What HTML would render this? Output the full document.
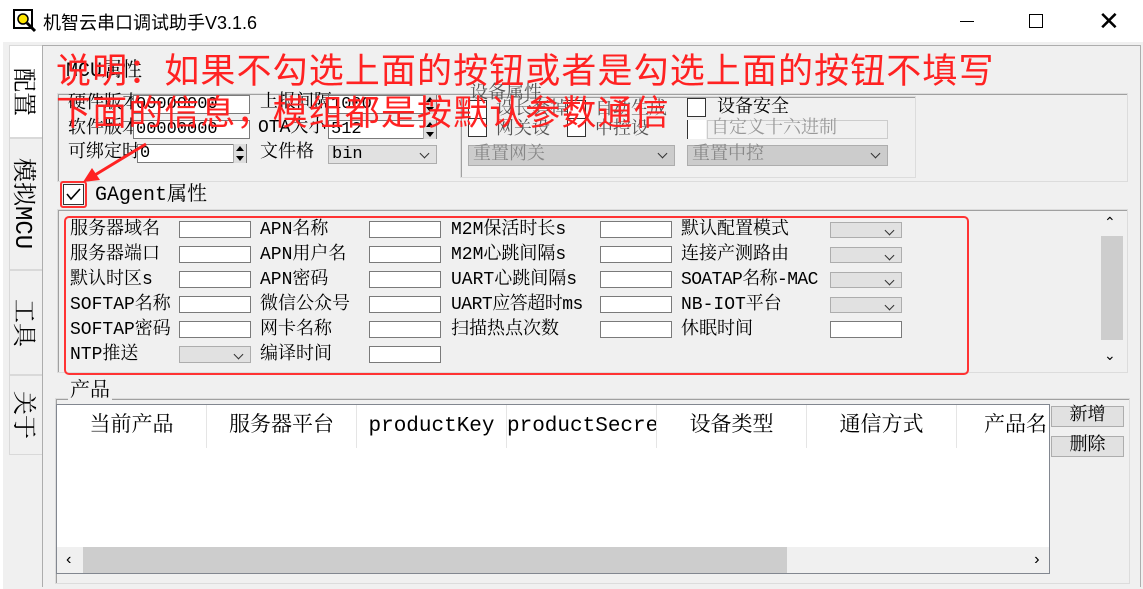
<!DOCTYPE html>
<html><head><meta charset="utf-8"><style>
*{box-sizing:border-box;margin:0;padding:0}
body{width:1143px;height:589px;background:#f0f0f0;position:relative;overflow:hidden;font-family:"Liberation Mono","Noto Serif CJK SC",serif;color:#000}
.a{position:absolute}
.t{position:absolute;font-size:18px;line-height:20px;white-space:nowrap}
.in{position:absolute;background:#fff;border:1px solid #7a7a7a;height:19px;font-size:17px;line-height:17px;padding-left:2px}
.sel{position:absolute;background:#e1e1e1;border:1px solid #adadad;height:19px}
.sel:after{content:"";position:absolute;right:8px;top:4px;width:6px;height:6px;border-right:1px solid #333;border-bottom:1px solid #333;transform:rotate(45deg)}
.grp{position:absolute;border:1px solid #dcdcdc;box-shadow:inset 1px 1px 0 #a0a0a0}
.tab{position:absolute;left:9px;width:33px;writing-mode:vertical-rl;text-orientation:sideways;font-size:24px;display:flex;align-items:center;justify-content:center;border:1px solid #d9d9d9;border-right:none}
.red{color:#ff2222;font-family:"Liberation Sans","Noto Sans CJK SC",sans-serif;font-size:35px;letter-spacing:1.1px;line-height:40px;position:absolute;white-space:nowrap}
.cb{position:absolute;width:19px;height:19px;background:#fff;border:1px solid #333}
.th{position:absolute;top:405px;height:43px;font-size:21px;line-height:43px;text-align:center;border-right:1px solid #e5e5e5}
.spin{position:absolute;width:13px;height:19px;background:#ddd;border-left:1px solid #aaa}
.spin:before{content:"";position:absolute;left:2px;top:2px;border:4px solid transparent;border-bottom:5px solid #000;border-top:none}
.spin:after{content:"";position:absolute;left:2px;bottom:2px;border:4px solid transparent;border-top:5px solid #000;border-bottom:none}
</style></head><body>
<div class="a" style="left:0;top:0;width:1143px;height:42px;background:#fff"></div>
<svg class="a" style="left:12px;top:9px" width="26" height="26"><rect x="2" y="1" width="18" height="18" fill="#fff" stroke="#000" stroke-width="2"/><circle cx="11" cy="10" r="5" fill="#ffe600" stroke="#000" stroke-width="1.5"/><line x1="15" y1="14" x2="23" y2="22" stroke="#000" stroke-width="3"/></svg>
<div class="a" style="left:43px;top:9px;font-family:'Liberation Sans','Noto Sans CJK SC',sans-serif;font-size:18px">机智云串口调试助手V3.1.6</div>
<div class="a" style="left:960px;top:21px;width:14px;height:1px;background:#000"></div>
<div class="a" style="left:1029px;top:14px;width:14px;height:14px;border:1px solid #000"></div>
<div class="a" style="left:1098px;top:6px;font-family:'Liberation Sans',sans-serif;font-size:26px;font-weight:100">✕</div>
<div class="a" style="left:0;top:42px;width:3px;height:547px;background:#fff"></div>
<div class="tab" style="top:45px;height:93px;background:#fff">配置</div>
<div class="tab" style="top:138px;height:132px">模拟MCU</div>
<div class="tab" style="top:270px;height:105px">工具</div>
<div class="tab" style="top:375px;height:80px">关于</div>
<div class="a" style="left:42px;top:45px;width:1099px;height:542px;border:1px solid #adadad;border-bottom:none"></div>
<div class="t" style="left:66px;top:62px;font-size:20px">MCU属性</div>
<div class="grp" style="left:57px;top:93px;width:1071px;height:89px"></div>
<div class="t" style="left:68px;top:94px">硬件版本</div><div class="in" style="left:133px;top:95px;width:117px">00000000</div>
<div class="t" style="left:68px;top:119px">软件版本</div><div class="in" style="left:133px;top:120px;width:117px">00000000</div>
<div class="t" style="left:68px;top:143px">可绑定时</div><div class="in" style="left:137px;top:144px;width:110px">0</div><div class="spin" style="left:233px;top:144px"></div>
<div class="t" style="left:260px;top:93px">上报间隔</div><div class="in" style="left:328px;top:95px;width:109px">1000</div><div class="spin" style="left:423px;top:95px"></div>
<div class="t" style="left:258px;top:118px">OTA大小</div><div class="in" style="left:328px;top:120px;width:109px">512</div><div class="spin" style="left:423px;top:120px"></div>
<div class="t" style="left:260px;top:143px">文件格</div><div class="sel" style="left:328px;top:145px;width:109px;font-size:17px;line-height:17px;padding-left:3px">bin</div>
<div class="grp" style="left:460px;top:96px;width:456px;height:82px"></div>
<div class="t" style="left:470px;top:84px;color:#555">设备属性</div>
<div class="cb" style="left:468px;top:100px"></div><div class="t" style="left:496px;top:100px;color:#555">设长套掉</div>
<div class="cb" style="left:468px;top:118px"></div><div class="t" style="left:496px;top:120px;color:#555">网关设</div>
<div class="cb" style="left:567px;top:100px"></div><div class="t" style="left:595px;top:100px;color:#555">自动生成</div>
<div class="cb" style="left:567px;top:118px"></div><div class="t" style="left:595px;top:120px;color:#555">中控设</div>
<div class="cb" style="left:687px;top:98px"></div><div class="t" style="left:717px;top:98px">设备安全</div>
<div class="a" style="left:687px;top:120px;width:19px;height:19px;background:#fff;border-left:1px solid #333"></div>
<div class="a" style="left:707px;top:120px;width:181px;height:19px;border:1px solid #ccc;background:#f0f0f0;color:#999;font-size:18px;line-height:17px;padding-left:3px">自定义十六进制</div>
<div class="sel" style="left:468px;top:145px;width:207px;height:21px;background:#ccc;color:#888;font-size:18px;line-height:18px;padding-left:4px">重置网关</div>
<div class="sel" style="left:687px;top:145px;width:201px;height:21px;background:#ccc;color:#888;font-size:18px;line-height:18px;padding-left:4px">重置中控</div>
<div class="a" style="left:60px;top:181px;width:27px;height:27px;border:2px solid #f33;border-radius:3px"></div>
<div class="a" style="left:63px;top:184px;width:21px;height:21px;border:1px solid #333;background:#fff"></div>
<svg class="a" style="left:63px;top:184px" width="21" height="21"><path d="M4 10 L8 15 L17 5" fill="none" stroke="#000" stroke-width="1.6"/></svg>
<div class="t" style="left:95px;top:185px;font-size:20px;line-height:22px">GAgent属性</div>
<div class="grp" style="left:57px;top:209px;width:1071px;height:164px"></div>
<div class="a" style="left:1100px;top:211px;width:24px;height:160px;background:#f0f0f0"></div>
<div class="a" style="left:1101px;top:236px;width:22px;height:104px;background:#cdcdcd"></div>
<div class="t" style="left:1104px;top:212px;font-size:14px;font-family:'Liberation Sans',sans-serif">⌃</div>
<div class="t" style="left:1104px;top:345px;font-size:14px;font-family:'Liberation Sans',sans-serif">⌄</div>
<div class="a" style="left:64px;top:216px;width:905px;height:159px;border:2px solid #f33;border-radius:5px"></div>
<div class="t" style="left:70px;top:220px">服务器域名</div><div class="in" style="left:179px;top:221px;width:72px;height:17px"></div>
<div class="t" style="left:70px;top:245px">服务器端口</div><div class="in" style="left:179px;top:246px;width:72px;height:17px"></div>
<div class="t" style="left:70px;top:270px">默认时区s</div><div class="in" style="left:179px;top:271px;width:72px;height:17px"></div>
<div class="t" style="left:70px;top:295px">SOFTAP名称</div><div class="in" style="left:179px;top:296px;width:72px;height:17px"></div>
<div class="t" style="left:70px;top:320px">SOFTAP密码</div><div class="in" style="left:179px;top:321px;width:72px;height:17px"></div>
<div class="t" style="left:70px;top:345px">NTP推送</div><div class="sel" style="left:179px;top:346px;width:72px;height:17px"></div>
<div class="t" style="left:260px;top:220px">APN名称</div><div class="in" style="left:369px;top:221px;width:72px;height:17px"></div>
<div class="t" style="left:260px;top:245px">APN用户名</div><div class="in" style="left:369px;top:246px;width:72px;height:17px"></div>
<div class="t" style="left:260px;top:270px">APN密码</div><div class="in" style="left:369px;top:271px;width:72px;height:17px"></div>
<div class="t" style="left:260px;top:295px">微信公众号</div><div class="in" style="left:369px;top:296px;width:72px;height:17px"></div>
<div class="t" style="left:260px;top:320px">网卡名称</div><div class="in" style="left:369px;top:321px;width:72px;height:17px"></div>
<div class="t" style="left:260px;top:345px">编译时间</div><div class="in" style="left:369px;top:346px;width:72px;height:17px"></div>
<div class="t" style="left:451px;top:220px">M2M保活时长s</div><div class="in" style="left:600px;top:221px;width:72px;height:17px"></div>
<div class="t" style="left:451px;top:245px">M2M心跳间隔s</div><div class="in" style="left:600px;top:246px;width:72px;height:17px"></div>
<div class="t" style="left:451px;top:270px">UART心跳间隔s</div><div class="in" style="left:600px;top:271px;width:72px;height:17px"></div>
<div class="t" style="left:451px;top:295px;letter-spacing:-0.5px">UART应答超时ms</div><div class="in" style="left:600px;top:296px;width:72px;height:17px"></div>
<div class="t" style="left:451px;top:320px">扫描热点次数</div><div class="in" style="left:600px;top:321px;width:72px;height:17px"></div>
<div class="t" style="left:681px;top:220px">默认配置模式</div><div class="sel" style="left:830px;top:222px;width:72px;height:16px"></div>
<div class="t" style="left:681px;top:245px">连接产测路由</div><div class="sel" style="left:830px;top:247px;width:72px;height:16px"></div>
<div class="t" style="left:681px;top:270px;letter-spacing:-0.6px">SOATAP名称-MAC</div><div class="sel" style="left:830px;top:272px;width:72px;height:16px"></div>
<div class="t" style="left:681px;top:295px">NB-IOT平台</div><div class="sel" style="left:830px;top:297px;width:72px;height:16px"></div>
<div class="t" style="left:681px;top:320px">休眠时间</div><div class="in" style="left:830px;top:321px;width:72px;height:17px"></div>
<div class="grp" style="left:55px;top:398px;width:1075px;height:186px"></div>
<div class="t" style="left:68px;top:382px;font-size:20px;background:#f0f0f0;padding:0 2px">产品</div>
<div class="a" style="left:56px;top:404px;width:994px;height:170px;background:#fff;border:1px solid #828790"></div>
<div class="th" style="left:57px;width:150px">当前产品</div>
<div class="th" style="left:207px;width:150px">服务器平台</div>
<div class="th" style="left:357px;width:150px">productKey</div>
<div class="th" style="left:507px;width:150px;text-align:right;padding-right:4px;overflow:hidden">productSecret</div>
<div class="th" style="left:657px;width:150px">设备类型</div>
<div class="th" style="left:807px;width:150px">通信方式</div>
<div class="th" style="left:957px;width:92px;border:none;text-align:left;padding-left:27px;overflow:hidden">产品名</div>
<div class="a" style="left:57px;top:547px;width:992px;height:26px;background:#f0f0f0"></div>
<div class="a" style="left:83px;top:547px;width:704px;height:26px;background:#cdcdcd"></div>
<div class="t" style="left:64px;top:550px;font-size:16px">‹</div>
<div class="t" style="left:1032px;top:550px;font-size:16px">›</div>
<div class="a" style="left:1051px;top:406px;width:73px;height:21px;background:#e1e1e1;border:1px solid #adadad;font-size:18px;line-height:19px;text-align:center">新增</div>
<div class="a" style="left:1051px;top:436px;width:73px;height:21px;background:#e1e1e1;border:1px solid #adadad;font-size:18px;line-height:19px;text-align:center">删除</div>
<div class="red" style="left:56px;top:52px">说明：如果不勾选上面的按钮或者是勾选上面的按钮不填写</div>
<div class="red" style="left:56px;top:94px">下面的信息，模组都是按默认参数通信</div>
<svg class="a" style="left:80px;top:140px" width="70" height="50"><line x1="66" y1="4" x2="10" y2="38" stroke="#f22" stroke-width="3"/><path d="M3 42 L20 40 L12 28 Z" fill="#f22"/></svg>
</body></html>
